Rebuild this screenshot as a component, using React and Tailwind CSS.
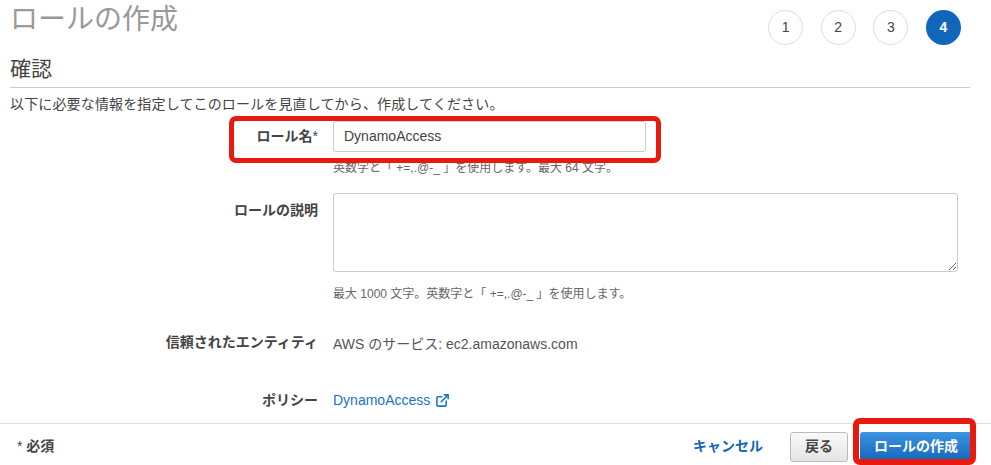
import { ExternalLink } from 'lucide-react'

const font = { fontFamily: '"Liberation Sans", "Noto Sans CJK JP", sans-serif' }

const Step = ({ n, active }) => (
  <div className={`w-[35px] h-[35px] rounded-full flex items-center justify-center text-[14px] ${active ? 'bg-[#1166bb] text-white font-bold' : 'border border-[#dddddd] text-[#444444]'}`}>
    {n}
  </div>
)

const Row = ({ label, className, labelClass, children }) => (
  <div className={`flex ${className}`}>
    <div className={`w-[318px] text-right text-[14px] font-bold text-[#444444] leading-[20px] shrink-0 ${labelClass}`}>{label}</div>
    <div className="ml-[15px] flex-1">{children}</div>
  </div>
)

export default function App() {
  return (
    <div className="relative w-[991px] h-[465px] overflow-hidden bg-white" style={font}>
      {/* Header */}
      <div className="flex justify-between h-[52px] pl-[10px] pr-[30px]">
        <h1 className="text-[28px] leading-[40px] text-[#999999]">ロールの作成</h1>
        <div className="flex pt-[10px] gap-[17.67px]">
          <Step n="1" />
          <Step n="2" />
          <Step n="3" />
          <Step n="4" active />
        </div>
      </div>

      <div className="mx-[10px] w-[960px] h-[36px] border-b border-[#cccccc]">
        <h2 className="text-[21px] leading-[33px] text-[#444444]">確認</h2>
      </div>
      <p className="ml-[10px] mt-[6px] text-[14px] tracking-[0.15px] leading-[20px] text-[#444444]">以下に必要な情報を指定してこのロールを見直してから、作成してください。</p>

      {/* Form */}
      <Row label={<>ロール名<span className="font-normal">*</span></>} className="mt-[7px] h-[64px]" labelClass="pt-[5px]">
        <div className="w-[313px] h-[31px] border border-[#cccccc] rounded-[3px] px-[10px] flex items-center text-[14px] text-[#444444]">DynamoAccess</div>
        <p className="mt-[6px] text-[12px] leading-[20px] text-[#666666]">英数字と「 +=,.@-_ 」を使用します。最大 64 文字。</p>
      </Row>
      <Row label="ロールの説明" className="mt-[8px] h-[133px]" labelClass="pt-[7px]">
        <textarea readOnly className="block w-[625px] h-[79px] border border-[#cccccc] rounded-[3px]" />
        <p className="mt-[12px] text-[12px] leading-[20px] text-[#666666]">最大 1000 文字。英数字と「 +=,.@-_ 」を使用します。</p>
      </Row>
      <Row label="信頼されたエンティティ" className="mt-[6px] h-[58px]">
        <span className="text-[14px] leading-[20px] text-[#555555]">AWS のサービス: ec2.amazonaws.com</span>
      </Row>
      <Row label="ポリシー" className="h-[33px]">
        <a className="flex items-center gap-[5px] text-[14px] leading-[20px] text-[#1a73c8]">
          DynamoAccess
          <ExternalLink size={15} strokeWidth={2.5} />
        </a>
      </Row>

      {/* Footer */}
      <div className="flex items-center justify-between h-[46px] border-t border-[#dddddd] pl-[17px] pr-[19px]">
        <span className="text-[14px] font-bold text-[#444444]"><span className="font-normal">*</span> 必須</span>
        <div className="flex items-center">
          <a className="text-[14px] font-bold text-[#1166bb]">キャンセル</a>
          <button className="ml-[27px] w-[58px] h-[30px] border border-[#bbbbbb] rounded-[3px] bg-gradient-to-b from-[#f9f9f9] to-[#e4e4e4] text-[14px] font-bold text-[#444444]">戻る</button>
          <button className="ml-[12px] w-[112px] h-[30px] rounded-[3px] bg-gradient-to-b from-[#3d94e2] to-[#1166bb] text-[14px] font-bold text-white">ロールの作成</button>
        </div>
      </div>

      {/* Red annotations */}
      <div className="absolute left-[229px] top-[116px] w-[432px] h-[47px] border-[5px] border-[#e8190e] rounded-[7px]" />
      <div className="absolute left-[853px] top-[418px] w-[123px] h-[47px] border-[6px] border-[#e8190e] rounded-[7px]" />
    </div>
  )
}
